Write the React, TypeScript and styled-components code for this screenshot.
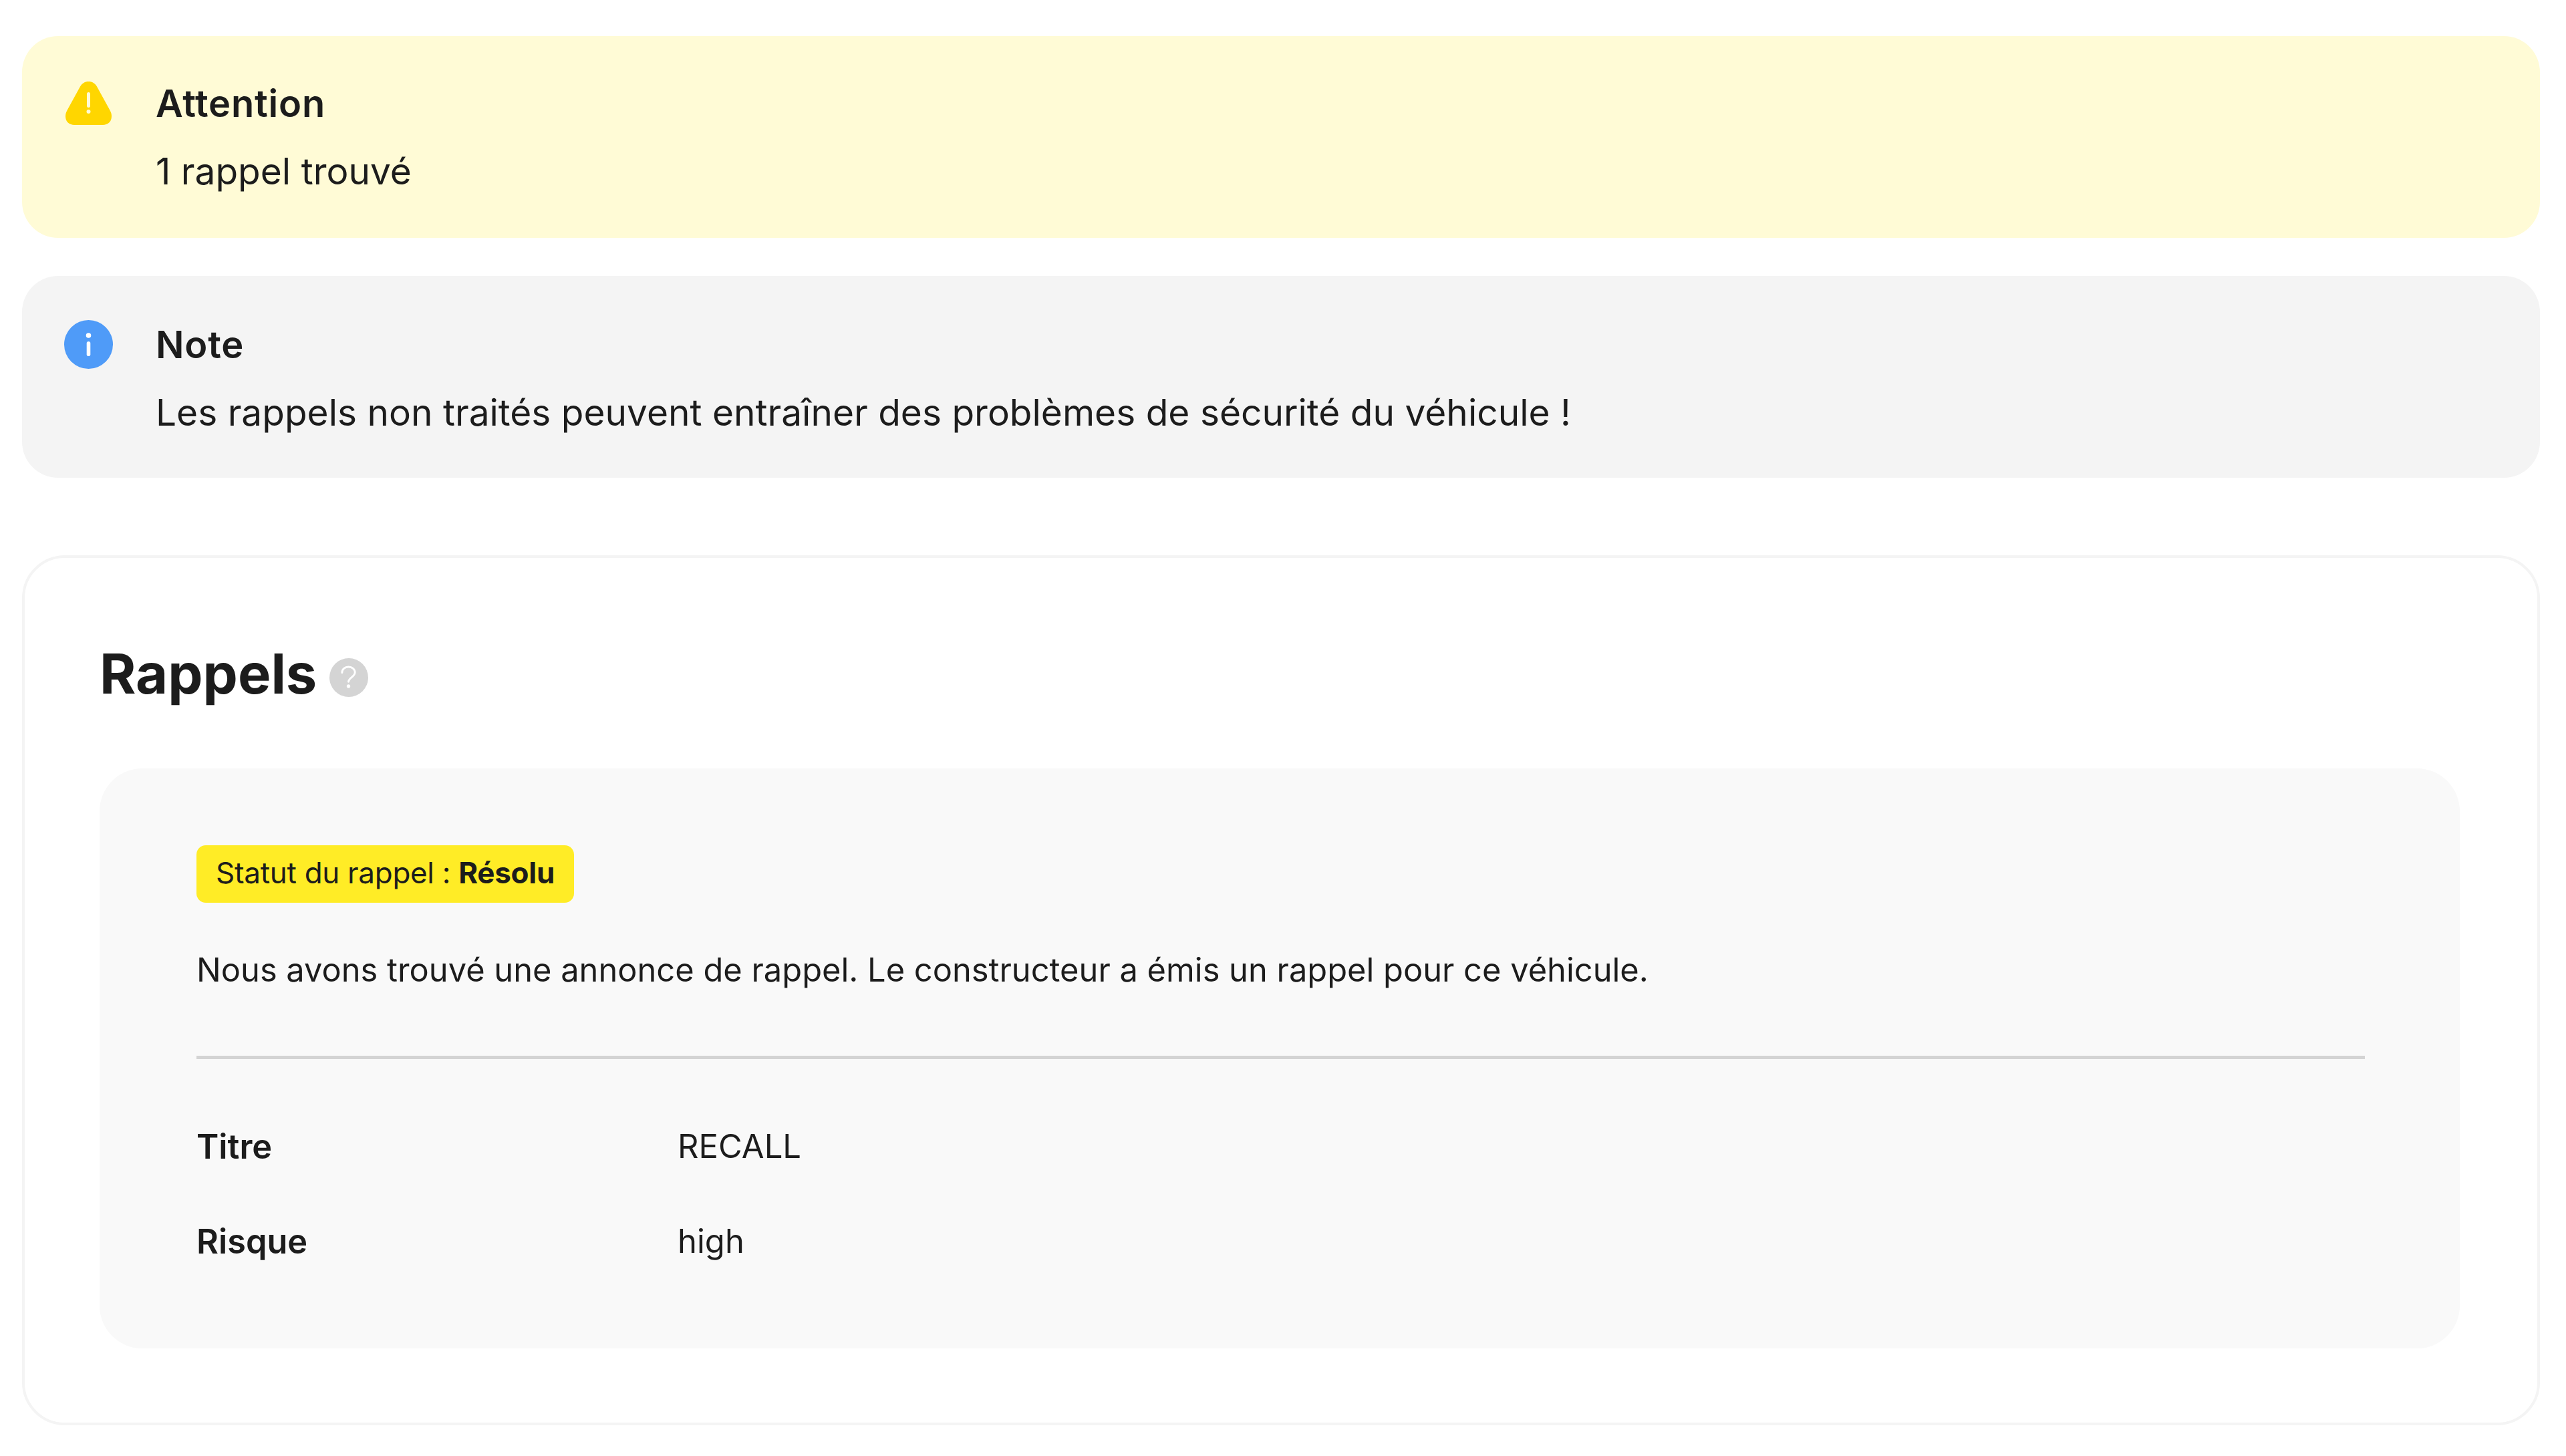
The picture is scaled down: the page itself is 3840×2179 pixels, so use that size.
import styled, { createGlobalStyle } from "styled-components";

const GlobalStyle = createGlobalStyle`
  html, body {
    margin: 0;
    padding: 0;
    background: #ffffff;
  }
  body {
    font-family: Inter, "Liberation Sans", sans-serif;
    color: #1c1c1c;
  }
`;

function WarningIcon() {
  return (
    <svg width="69" height="65" viewBox="0 0 69 65">
      <path
        d="M34.500 0C40 0 44 2.500 47 7.500L66.500 43C68.300 46.300 69 49 69 52C69 60 63.500 65 55.500 65H13.500C5.500 65 0 60 0 52C0 49 .7 46.300 2.500 43L22 7.500C25 2.500 29 0 34.500 0Z"
        fill="#ffd600"
      />
      <rect x="32" y="16" width="5" height="23" rx="2.500" fill="#fffbd6" />
      <circle cx="34.500" cy="45" r="3" fill="#fffbd6" />
    </svg>
  );
}

function InfoIcon() {
  return (
    <svg width="73" height="73" viewBox="0 0 73 73">
      <circle cx="36.500" cy="36.500" r="36.500" fill="#4f9bf8" />
      <circle cx="36.500" cy="23" r="3.800" fill="#ffffff" />
      <rect x="33.700" y="32" width="5.600" height="22" rx="2.800" fill="#ffffff" />
    </svg>
  );
}

function HelpIcon() {
  return (
    <svg width="58" height="58" viewBox="0 0 60 60">
      <circle cx="30" cy="30" r="30" fill="#d4d4d4" />
      <path
        d="M19.500 22.500c0-5.500 4.500-9 10-9s10 3.500 10 8.500c0 7-10 8-10 14.500"
        fill="none"
        stroke="#ffffff"
        strokeWidth="3"
        strokeLinecap="round"
      />
      <circle cx="29.500" cy="43.500" r="2.800" fill="#ffffff" />
    </svg>
  );
}

export default function App() {
  return (
    <>
      <GlobalStyle />
      <Page>
        <Alert $tone="warning">
          <AlertIcon>
            <WarningIcon />
          </AlertIcon>
          <AlertBody>
            <AlertTitle>Attention</AlertTitle>
            <AlertText>1 rappel trouvé</AlertText>
          </AlertBody>
        </Alert>
        <Alert $tone="note">
          <AlertIcon>
            <InfoIcon />
          </AlertIcon>
          <AlertBody>
            <AlertTitle>Note</AlertTitle>
            <AlertText>Les rappels non traités peuvent entraîner des problèmes de sécurité du véhicule !</AlertText>
          </AlertBody>
        </Alert>
        <Card>
          <Heading>
            <HeadingText>Rappels</HeadingText>
            <HelpSlot>
              <HelpIcon />
            </HelpSlot>
          </Heading>
          <Panel>
            <Badge>
              Statut du rappel : <strong>Résolu</strong>
            </Badge>
            <Description>
              Nous avons trouvé une annonce de rappel. Le constructeur a émis un rappel pour ce véhicule.
            </Description>
            <Divider />
            <Details>
              <DetailLabel>Titre</DetailLabel>
              <DetailValue>RECALL</DetailValue>
              <DetailLabel>Risque</DetailLabel>
              <DetailValue>high</DetailValue>
            </Details>
          </Panel>
        </Card>
      </Page>
    </>
  );
}

const Page = styled.div`
  box-sizing: border-box;
  width: 3840px;
  height: 2179px;
  padding: 54px 39px 0 33px;
  display: flex;
  flex-direction: column;
  gap: 57px;
  overflow: hidden;
`;

const Alert = styled.div<{ $tone: "warning" | "note" }>`
  box-sizing: border-box;
  flex: none;
  height: 302px;
  padding: ${(p) => (p.$tone === "warning" ? "66px" : "68px")} 64px 0 63px;
  display: flex;
  border-radius: 54px;
  background: ${(p) => (p.$tone === "warning" ? "#fffbd6" : "#f4f4f4")};
`;

const AlertIcon = styled.div`
  width: 73px;
  height: 73px;
  margin: -2px 64px 0 0;
  display: flex;
  align-items: center;
  justify-content: center;
`;

const AlertBody = styled.div`
  display: flex;
  flex-direction: column;
  gap: 31px;
`;

const AlertTitle = styled.div`
  font-size: 56px;
  line-height: 70px;
  font-weight: 600;
  letter-spacing: 0.8px;
`;

const AlertText = styled.div`
  font-size: 55px;
  line-height: 70px;
`;

const Card = styled.section`
  box-sizing: border-box;
  flex: none;
  height: 1302px;
  margin-top: 59px;
  padding: 123px 116px 0 112px;
  border: 4px solid #f4f4f4;
  border-radius: 64px;
`;

const Heading = styled.div`
  height: 100px;
  display: flex;
  align-items: center;
  gap: 19px;
  margin-bottom: 92px;
`;

const HeadingText = styled.h1`
  margin: 0;
  font-size: 83px;
  line-height: 100px;
  font-weight: 700;
`;

const HelpSlot = styled.span`
  display: flex;
  margin-top: 12px;
`;

const Panel = styled.div`
  box-sizing: border-box;
  height: 868px;
  padding: 115px 142px 0 145px;
  border-radius: 64px;
  background: #f9f9f9;
`;

const Badge = styled.div`
  box-sizing: border-box;
  width: fit-content;
  height: 86px;
  padding: 0 29px 4px;
  display: flex;
  align-items: center;
  border-radius: 14px;
  background: #ffec26;
  font-size: 44px;
  letter-spacing: -0.3px;
  white-space: pre-wrap;
`;

const Description = styled.p`
  margin: 66px 0 0;
  font-size: 48.800px;
  line-height: 70px;
`;

const Divider = styled.hr`
  height: 5px;
  margin: 93px 0 0;
  border: 0;
  background: #d4d4d4;
`;

const Details = styled.div`
  margin-top: 96px;
  display: grid;
  grid-template-columns: 720px 1fr;
  row-gap: 72px;
`;

const DetailLabel = styled.div`
  font-size: 50.500px;
  line-height: 70px;
  font-weight: 600;
`;

const DetailValue = styled.div`
  font-size: 49px;
  line-height: 70px;
`;
